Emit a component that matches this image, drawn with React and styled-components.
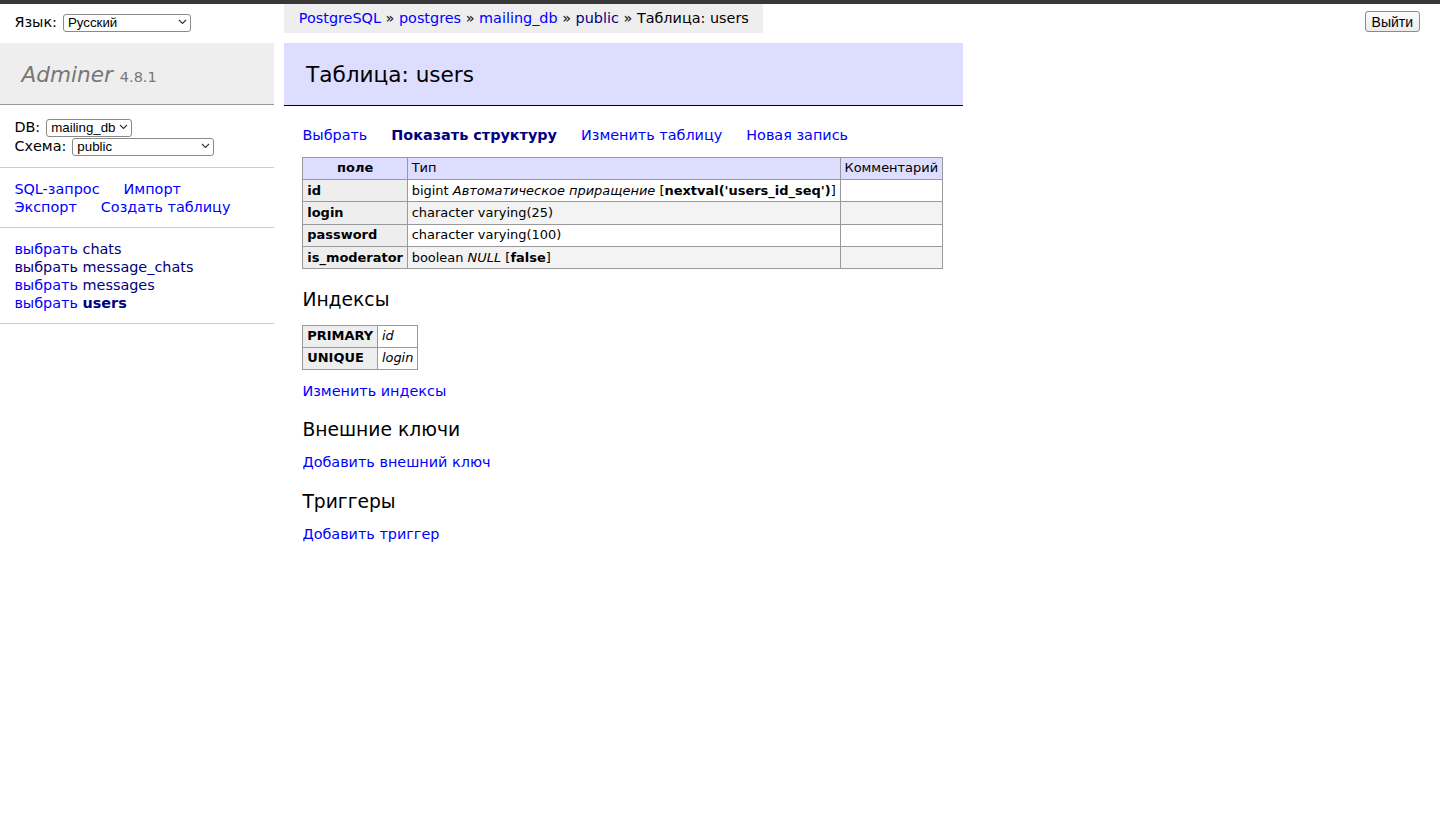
import React from 'react'
import styled, { createGlobalStyle } from 'styled-components'

const GlobalStyle = createGlobalStyle`
  html, body {
    margin: 0;
    background: #fff;
  }
  body {
    color: #000;
    font: 14.4px/1.25 "DejaVu Sans", Verdana, sans-serif;
  }
`

const TopBar = styled.div`
  height: 4px;
  background: #383838;
`

const Layout = styled.div`
  display: flex;
  align-items: flex-start;
`

const Sidebar = styled.div`
  width: 273.6px;
  flex: none;
`

const Lang = styled.div`
  display: flex;
  align-items: center;
  gap: 6px;
  height: 1.8em;
  padding: 5.5px 1em 3.1px;
  white-space: nowrap;
`

const Menu = styled.div`
  margin-top: 4.2px;
`

const Logo = styled.h1`
  font-size: 21.6px;
  font-weight: normal;
  margin: 0;
  padding: 19.5px 1em 15.1px;
  color: #777;
  background: #eee;
  border-bottom: 1px solid #999;
`

const LogoName = styled.span`
  font-style: italic;
`

const Version = styled.span`
  font-size: 67%;
`

const MenuBlock = styled.div`
  padding: 0.8em 1em;
  margin: 0;
  border-bottom: 1px solid #ccc;
`

const SelectLine = styled.div`
  height: 19.5px;
  display: flex;
  align-items: center;
  gap: 6px;
`

const TableList = styled.ul`
  list-style: none;
  margin: 0;
  padding: 0.8em 1em;
  border-bottom: 1px solid #ccc;
  white-space: nowrap;
`

const Link = styled.a`
  color: ${p => (p.$visited ? 'navy' : 'blue')};
  font-weight: ${p => (p.$bold ? 'bold' : 'normal')};
  text-decoration: none;
  cursor: pointer;
`

const LinkRow = styled.p`
  margin: ${p => (p.$flat ? '0' : '0.8em 20px 0 0')};
  display: flex;
  flex-wrap: wrap;
  column-gap: 24px;
  white-space: nowrap;
`

const SelectBox = styled.span`
  position: relative;
  display: inline-block;
  width: ${p => p.$width}px;
  height: 18px;
`

const NativeSelect = styled.select`
  appearance: none;
  width: 100%;
  height: 100%;
  box-sizing: border-box;
  margin: 0;
  padding: 0 12px 0 4px;
  font: 13.3px/16px "Liberation Sans", Arial, sans-serif;
  color: #000;
  background: #fff;
  border: 1px solid #8a8a8a;
  border-radius: 3px;
`

const Chevron = styled.svg`
  position: absolute;
  right: 4px;
  top: 6px;
  pointer-events: none;
`

const Main = styled.div`
  flex: none;
`

const Breadcrumb = styled.div`
  display: inline-block;
  box-sizing: border-box;
  white-space: nowrap;
  background: #eee;
  height: 2em;
  line-height: 1.8em;
  padding: 2px 1em 0;
  margin-left: 10.8px;
`

const Content = styled.div`
  width: fit-content;
  margin-left: 28.8px;
  padding: 10px 20px 20px 0;
`

const Title = styled.h2`
  font-size: 21.6px;
  font-weight: normal;
  margin: 0 0 20px -18px;
  padding: 19px 1em 16px;
  border-bottom: 1px solid #000;
  background: #ddf;
  color: #000;
`

const Section = styled.h3`
  font-size: 18.72px;
  font-weight: normal;
  margin: 1em 0 0;
`

const Grid = styled.table`
  margin: 1em 20px 0 0;
  border-collapse: collapse;
  font-size: 12.96px;

  td, th {
    border: 1px solid #999;
    padding: 0.2em 0.3em;
    white-space: nowrap;
  }
  th {
    background: #eee;
    text-align: left;
  }
  thead th {
    text-align: center;
    padding: 0.2em 0.5em;
  }
  thead td, thead th {
    background: #ddf;
  }
  tbody tr:nth-child(2n) {
    background: ${p => (p.$odds ? '#f3f3f3' : 'transparent')};
  }
  tbody tr:nth-child(2n) th {
    background: #eee;
  }
`

const Note = styled.i``

const Logout = styled.button`
  margin: 7px 20px 0 auto;
  padding: 1px 6px;
  height: 21px;
  font: 14px "Liberation Sans", Arial, sans-serif;
  color: #000;
  background: linear-gradient(#fbfbfb, #ececec);
  border: 1px solid #8a8a8a;
  border-radius: 3px;
`

function Select({ width, value }) {
  return (
    <SelectBox $width={width}>
      <NativeSelect defaultValue={value}>
        <option>{value}</option>
      </NativeSelect>
      <Chevron width="9" height="6" viewBox="0 0 9 6">
        <path d="M1 1l3.5 3.5L8 1" fill="none" stroke="#333" strokeWidth="1.1" />
      </Chevron>
    </SelectBox>
  )
}

const columns = [
  { name: 'id', type: <>bigint <Note>Автоматическое приращение</Note> [<b>nextval('users_id_seq')</b>]</> },
  { name: 'login', type: 'character varying(25)' },
  { name: 'password', type: 'character varying(100)' },
  { name: 'is_moderator', type: <>boolean <Note>NULL</Note> [<b>false</b>]</> },
]

const tables = [
  { name: 'chats', visited: false },
  { name: 'message_chats', visited: true },
  { name: 'messages', visited: false },
  { name: 'users', visited: false, active: true },
]

export default function App() {
  return (
    <>
      <GlobalStyle />
      <TopBar />
      <Layout>
        <Sidebar>
          <Lang>
            Язык: <Select width={128} value="Русский" />
          </Lang>
          <Menu>
            <Logo>
              <LogoName>Adminer</LogoName> <Version>4.8.1</Version>
            </Logo>
            <MenuBlock>
              <SelectLine>DB: <Select width={86} value="mailing_db" /></SelectLine>
              <SelectLine>Схема: <Select width={142} value="public" /></SelectLine>
            </MenuBlock>
            <MenuBlock>
              <LinkRow $flat>
                <Link>SQL-запрос</Link>
                <Link>Импорт</Link>
                <Link>Экспорт</Link>
                <Link>Создать таблицу</Link>
              </LinkRow>
            </MenuBlock>
            <TableList>
              {tables.map(t => (
                <li key={t.name}>
                  <Link $visited={t.visited}>выбрать</Link>{' '}
                  <Link $visited $bold={t.active}>{t.name}</Link>
                </li>
              ))}
            </TableList>
          </Menu>
        </Sidebar>
        <Main>
          <Breadcrumb>
            <Link>PostgreSQL</Link> » <Link>postgres</Link> » <Link>mailing_db</Link> »{' '}
            <Link $visited>public</Link> » Таблица: users
          </Breadcrumb>
          <Content>
            <Title>Таблица: users</Title>
            <LinkRow>
              <Link>Выбрать</Link>
              <Link $visited $bold>Показать структуру</Link>
              <Link>Изменить таблицу</Link>
              <Link>Новая запись</Link>
            </LinkRow>
            <Grid $odds>
              <thead>
                <tr>
                  <th>поле</th>
                  <td>Тип</td>
                  <td>Комментарий</td>
                </tr>
              </thead>
              <tbody>
                {columns.map(c => (
                  <tr key={c.name}>
                    <th>{c.name}</th>
                    <td>{c.type}</td>
                    <td></td>
                  </tr>
                ))}
              </tbody>
            </Grid>
            <Section>Индексы</Section>
            <Grid>
              <tbody>
                <tr><th>PRIMARY</th><td><Note>id</Note></td></tr>
                <tr><th>UNIQUE</th><td><Note>login</Note></td></tr>
              </tbody>
            </Grid>
            <LinkRow><Link>Изменить индексы</Link></LinkRow>
            <Section>Внешние ключи</Section>
            <LinkRow><Link>Добавить внешний ключ</Link></LinkRow>
            <Section>Триггеры</Section>
            <LinkRow><Link>Добавить триггер</Link></LinkRow>
          </Content>
        </Main>
        <Logout>Выйти</Logout>
      </Layout>
    </>
  )
}
